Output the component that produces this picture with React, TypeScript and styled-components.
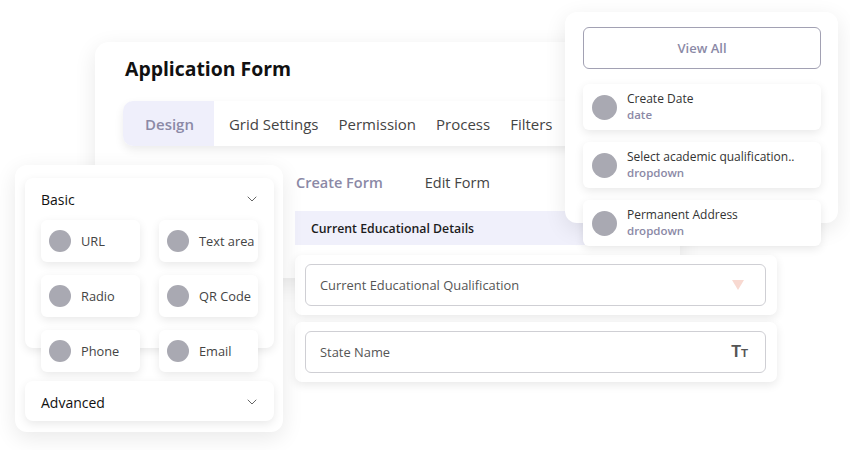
import React from 'react';
import styled, { createGlobalStyle } from 'styled-components';
import { ChevronDown } from 'lucide-react';

const GlobalStyle = createGlobalStyle`
    body {
        margin: 0;
        background: #ffffff;
        font-family: 'Open Sans', 'Liberation Sans', sans-serif;
        color: #333;
    }
`;

const Stage = styled.div`
    position: relative;
    width: 850px;
    height: 450px;
    overflow: hidden;
    background: #fff;
`;

const cardShadow = '0 6px 22px rgba(0, 0, 0, 0.09)';
const tileShadow = '0 3px 10px rgba(0, 0, 0, 0.09)';

// ---------- main form window ----------
const MainCard = styled.div`
    position: absolute;
    left: 95px;
    top: 42px;
    width: 585px;
    height: 236px;
    background: #fff;
    border-radius: 14px;
    box-shadow: ${cardShadow};
    display: flex;
    flex-direction: column;
    z-index: 1;
`;

const Title = styled.h1`
    margin: 15px 0 0 30px;
    font-size: 19.4px;
    line-height: 24px;
    font-weight: 700;
    color: #111;
`;

const TabBar = styled.div`
    margin: 20px 0 0 28px;
    width: 520px;
    height: 45px;
    flex: none;
    display: flex;
    align-items: stretch;
    border-radius: 10px;
    background: #fff;
    box-shadow: 0 4px 10px rgba(0, 0, 0, 0.08);
    overflow: hidden;
`;

const Tab = styled.div<{ $active?: boolean }>`
    display: flex;
    align-items: center;
    padding: ${(p) => (p.$active ? '0 20px 0 22px' : '0 10px')};
    margin-right: ${(p) => (p.$active ? '5px' : '0')};
    font-size: 15px;
    font-weight: ${(p) => (p.$active ? 600 : 400)};
    color: ${(p) => (p.$active ? '#8b89a6' : '#444')};
    background: ${(p) => (p.$active ? '#efeffb' : 'transparent')};
`;

const FormSection = styled.div`
    margin: 24px 0 0 200px;
    display: flex;
    flex-direction: column;
`;

const SubTabs = styled.div`
    display: flex;
    gap: 42px;
    padding-left: 1px;
    height: 25px;
    align-items: center;
`;

const SubTab = styled.span<{ $active?: boolean }>`
    font-size: 14.5px;
    font-weight: ${(p) => (p.$active ? 600 : 400)};
    color: ${(p) => (p.$active ? '#8b89a6' : '#444')};
`;

const SectionHeader = styled.div`
    margin-top: 16px;
    height: 34px;
    display: flex;
    align-items: center;
    padding-left: 16px;
    background: #f0f0fb;
    font-size: 12.3px;
    font-weight: 600;
    color: #1c1c1c;
`;

// ---------- field cards ----------
const FieldCard = styled.div<{ $top: number }>`
    position: absolute;
    left: 295px;
    top: ${(p) => p.$top}px;
    width: 482px;
    padding: 9px 11px 9px 10px;
    box-sizing: border-box;
    background: #fff;
    border-radius: 7px;
    box-shadow: ${tileShadow};
    z-index: 2;
`;

const FieldInput = styled.div`
    height: 42px;
    box-sizing: border-box;
    border: 1px solid #cfcfd4;
    border-radius: 6px;
    display: flex;
    align-items: center;
    justify-content: space-between;
    padding: 0 17px 0 14px;
    font-size: 12.9px;
    color: #555;
`;

const DropTriangle = styled.span`
    width: 0;
    height: 0;
    border-left: 6px solid transparent;
    border-right: 6px solid transparent;
    border-top: 10px solid #f8d9d1;
    margin-right: 4px;
`;

const TextGlyph = styled.span`
    display: flex;
    align-items: baseline;
    font-family: 'Liberation Sans', sans-serif;
    font-weight: 700;
    color: #555;
    line-height: 1;
`;

const BigT = styled.span`
    font-size: 16px;
`;

const SmallT = styled.span`
    font-size: 11.5px;
`;

// ---------- left toolbox panel ----------
const SidePanel = styled.div`
    position: absolute;
    left: 15px;
    top: 165px;
    width: 268px;
    height: 267px;
    box-sizing: border-box;
    padding: 13px 9px 0 10px;
    background: #fff;
    border-radius: 12px;
    box-shadow: ${cardShadow};
    display: flex;
    flex-direction: column;
    z-index: 3;
`;

const GroupCard = styled.div<{ $height: number }>`
    height: ${(p) => p.$height}px;
    flex: none;
    background: #fff;
    border-radius: 8px;
    box-shadow: ${tileShadow};
    display: flex;
    flex-direction: column;
`;

const GroupHeader = styled.div<{ $tall?: boolean }>`
    height: ${(p) => (p.$tall ? '42px' : '40px')};
    flex: none;
    display: flex;
    align-items: center;
    justify-content: space-between;
    padding: ${(p) => (p.$tall ? '0' : '2px')} 14px 0 16px;
    box-sizing: border-box;
    font-size: 14px;
    font-weight: 500;
    color: #111;
`;

const ToolGrid = styled.div`
    display: grid;
    flex: none;
    grid-template-columns: 99px 99px;
    column-gap: 19px;
    row-gap: 13px;
    padding-left: 16px;
`;

const ToolTile = styled.div`
    height: 42px;
    display: flex;
    align-items: center;
    gap: 10px;
    padding-left: 8px;
    background: #fff;
    border-radius: 6px;
    box-shadow: ${tileShadow};
    font-size: 12.8px;
    color: #444;
`;

const Dot = styled.span<{ $size: number }>`
    width: ${(p) => p.$size}px;
    height: ${(p) => p.$size}px;
    flex: none;
    border-radius: 50%;
    background: #a9a9b2;
`;

const AdvancedCard = styled(GroupCard)`
    margin-top: 33px;
`;

// ---------- right recent fields panel ----------
const ListCard = styled.div`
    position: absolute;
    left: 565px;
    top: 12px;
    width: 273px;
    height: 211px;
    box-sizing: border-box;
    padding: 15px 17px 0 18px;
    background: #fff;
    border-radius: 12px;
    box-shadow: ${cardShadow};
    display: flex;
    flex-direction: column;
    gap: 12px;
    z-index: 4;
`;

const ViewAllButton = styled.button`
    height: 42px;
    margin-bottom: 3px;
    flex: none;
    border: 1px solid #a2a1b3;
    border-radius: 6px;
    background: #fff;
    font-family: inherit;
    font-size: 13px;
    font-weight: 600;
    color: #8b89a6;
`;

const FieldItem = styled.div`
    height: 46px;
    flex: none;
    display: flex;
    align-items: center;
    gap: 10px;
    padding-left: 9px;
    background: #fff;
    border-radius: 6px;
    box-shadow: ${tileShadow};
`;

const FieldText = styled.div`
    display: flex;
    flex-direction: column;
    line-height: 16px;
`;

const FieldName = styled.span`
    font-size: 12px;
    font-weight: 500;
    color: #333;
`;

const FieldType = styled.span`
    font-size: 11.5px;
    font-weight: 600;
    color: #8b89a6;
`;

const tabs = ['Grid Settings', 'Permission', 'Process', 'Filters'];
const tools = ['URL', 'Text area', 'Radio', 'QR Code', 'Phone', 'Email'];
const recent = [
    { name: 'Create Date', type: 'date' },
    { name: 'Select academic qualification..', type: 'dropdown' },
    { name: 'Permanent Address', type: 'dropdown' },
];

const App: React.FC = () => {
    return (
        <Stage>
            <GlobalStyle />

            <MainCard>
                <Title>Application Form</Title>
                <TabBar>
                    <Tab $active>Design</Tab>
                    {tabs.map((t) => (
                        <Tab key={t}>{t}</Tab>
                    ))}
                </TabBar>
                <FormSection>
                    <SubTabs>
                        <SubTab $active>Create Form</SubTab>
                        <SubTab>Edit Form</SubTab>
                    </SubTabs>
                    <SectionHeader>Current Educational Details</SectionHeader>
                </FormSection>
            </MainCard>

            <FieldCard $top={255}>
                <FieldInput>
                    Current Educational Qualification
                    <DropTriangle />
                </FieldInput>
            </FieldCard>
            <FieldCard $top={322}>
                <FieldInput>
                    State Name
                    <TextGlyph>
                        <BigT>T</BigT>
                        <SmallT>T</SmallT>
                    </TextGlyph>
                </FieldInput>
            </FieldCard>

            <SidePanel>
                <GroupCard $height={170}>
                    <GroupHeader $tall>
                        Basic
                        <ChevronDown size={16} strokeWidth={1.5} color="#666" />
                    </GroupHeader>
                    <ToolGrid>
                        {tools.map((t) => (
                            <ToolTile key={t}>
                                <Dot $size={22} />
                                {t}
                            </ToolTile>
                        ))}
                    </ToolGrid>
                </GroupCard>
                <AdvancedCard $height={40}>
                    <GroupHeader>
                        Advanced
                        <ChevronDown size={16} strokeWidth={1.5} color="#666" />
                    </GroupHeader>
                </AdvancedCard>
            </SidePanel>

            <ListCard>
                <ViewAllButton>View All</ViewAllButton>
                {recent.map((r) => (
                    <FieldItem key={r.name}>
                        <Dot $size={25} />
                        <FieldText>
                            <FieldName>{r.name}</FieldName>
                            <FieldType>{r.type}</FieldType>
                        </FieldText>
                    </FieldItem>
                ))}
            </ListCard>
        </Stage>
    );
};

export default App;
